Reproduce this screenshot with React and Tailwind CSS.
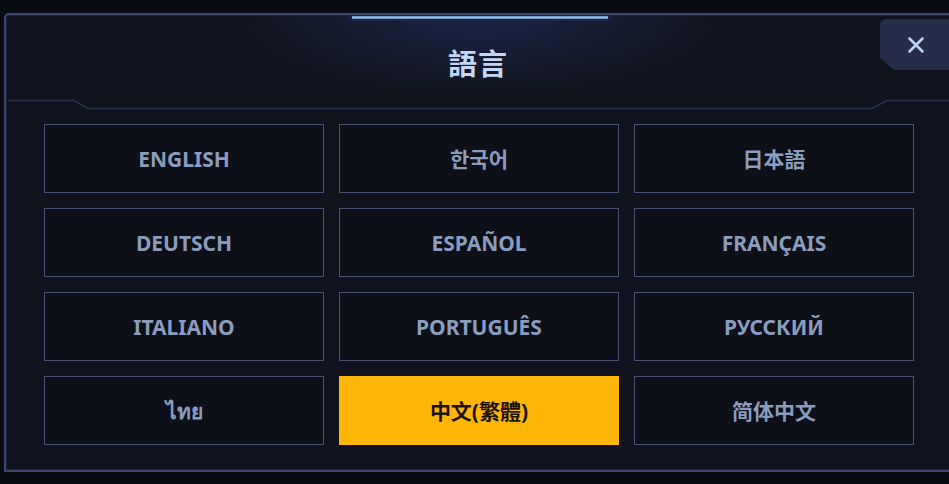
import { X } from "lucide-react";

const languages = [
  "ENGLISH",
  "한국어",
  "日本語",
  "DEUTSCH",
  "ESPAÑOL",
  "FRANÇAIS",
  "ITALIANO",
  "PORTUGUÊS",
  "РУССКИЙ",
  "ไทย",
  "中文(繁體)",
  "简体中文",
];

const selected = "中文(繁體)";

const App = () => {
  return (
    <div
      className="w-[949px] h-[484px] overflow-hidden bg-[#0a0c13] pt-[13px] pl-[4px]"
      style={{ fontFamily: '"Noto Sans", "Noto Sans CJK TC", "Noto Sans CJK SC", sans-serif' }}
    >
      {/* PANEL */}
      <div className="relative w-[960px] h-[459px] border-2 border-r-0 border-[#3d4670] rounded-tl-[5px] bg-[#10131d] shadow-[inset_0_0_0_1px_#1c2238]">
        {/* top glow */}
        <div className="absolute left-[200px] top-0 w-[548px] h-[90px] bg-[radial-gradient(ellipse_at_top,#1b2646_0%,transparent_65%)]" />

        {/* top highlight bar */}
        <svg className="absolute left-[338px] top-0" width="272" height="10" viewBox="0 0 272 10">
          <path d="M0 0 L8 6 L264 6 L272 0 Z" fill="#1a2440" />
          <path d="M8 2.5 L264 2.5" stroke="#8fc0ee" strokeWidth="2.5" />
        </svg>

        {/* header */}
        <div className="relative h-[92px] flex items-center justify-center pr-[14px]">
          <h2 className="text-[29px] font-bold text-[#c3d6f4] tracking-[1px] mt-[6px]">語言</h2>
        </div>

        {/* header separator */}
        <svg className="absolute left-0 top-[84px]" width="943" height="12" viewBox="0 0 943 12">
          <path
            d="M2 1.5 L68 1.5 L82 9.5 L866 9.5 L881 1.5 L943 1.5"
            fill="none"
            stroke="#2a3150"
            strokeWidth="1.5"
          />
        </svg>

        {/* close */}
        <button className="absolute left-[874px] top-[4px] w-[80px] h-[51px] bg-[#262d4b] rounded-tl-[6px] flex items-center pl-[23px] [clip-path:polygon(0_0,100%_0,100%_100%,14px_100%,0_calc(100%-12px))]">
          <X className="w-[26px] h-[26px] text-[#bcd3f4]" strokeWidth={2.4} />
        </button>

        {/* grid */}
        <div className="grid grid-cols-[280px_280px_280px] gap-x-[15px] gap-y-[15px] pl-[38px] pt-[17px]">
          {languages.map((lang) =>
            lang === selected ? (
              <div
                key={lang}
                className="h-[69px] flex items-center justify-center pt-[2px] bg-[#fdb608] text-[#1b1306] text-[21px] font-bold"
              >
                {lang}
              </div>
            ) : (
              <div
                key={lang}
                className="h-[69px] flex items-center justify-center pt-[2px] border-[1.5px] border-[#4a5276] bg-[#0d0f19] text-[#8a9dbe] text-[21px] font-bold"
              >
                {lang}
              </div>
            )
          )}
        </div>
      </div>
    </div>
  );
};

export default App;
